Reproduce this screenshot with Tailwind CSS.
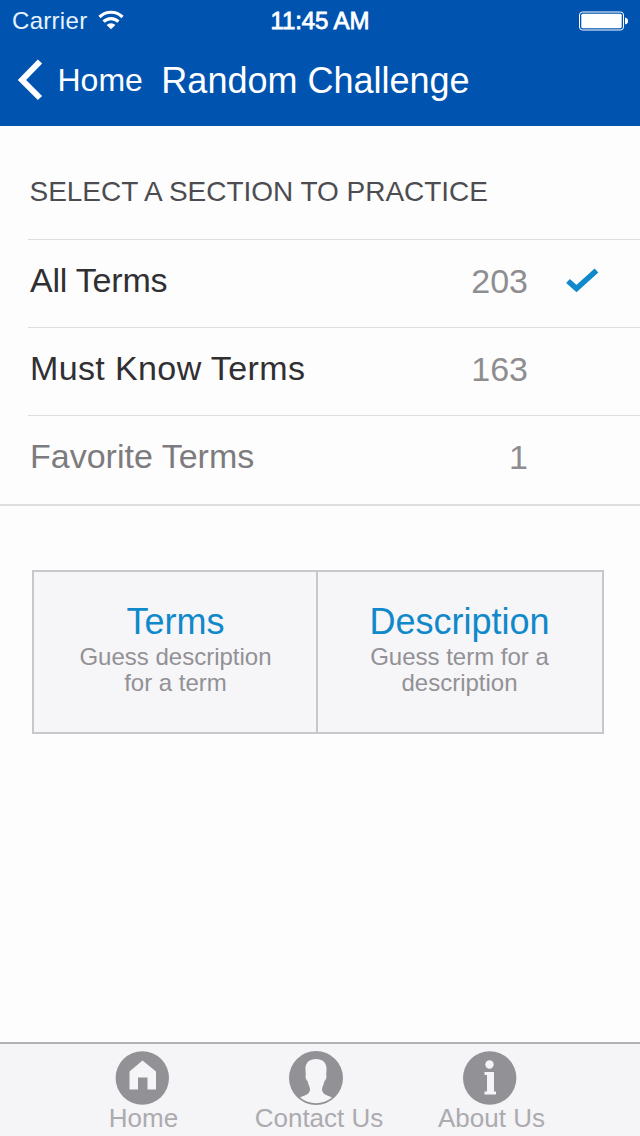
<!DOCTYPE html>
<html lang="en">
<head>
<meta charset="utf-8">
<title>Random Challenge</title>
<script src="https://cdn.jsdelivr.net/npm/@tailwindcss/browser@4"></script>
</head>
<body class="w-[640px] h-[1136px] flex flex-col overflow-hidden bg-[#fefdfe] font-['Liberation_Sans',Arial,sans-serif] whitespace-nowrap">
  <header class="h-[126px] shrink-0 bg-[#0054b0] text-white">
    <div class="h-10 grid grid-cols-3 items-center pl-[12px] pr-[11px] pt-[2px]">
      <div class="flex items-center gap-[11px]">
        <span class="text-[24px] leading-none tracking-[0.3px] text-[#e6f2ff]">Carrier</span>
        <svg class="w-[26px] h-[20px] -mt-[2px]" viewBox="0 0 26 20" fill="none" stroke="#fff" stroke-width="3.200"><path d="M1.500 7A16.300 16.300 0 0 1 24.500 7"/><path d="M5.600 11.700A10.500 10.500 0 0 1 20.400 11.700"/><path d="M8.600 15A6.300 6.300 0 0 1 17.400 15L13 19.300Z" fill="#fff" stroke="none"/></svg>
      </div>
      <span class="text-[24px] leading-none text-center tracking-[-0.1px] -ml-px [-webkit-text-stroke:0.8px_white]">11:45 AM</span>
      <svg class="w-[50px] h-5 justify-self-end -mt-px" viewBox="0 0 50 20"><rect x="0.500" y="1" width="44" height="18" rx="3" fill="none" stroke="#fff"/><rect x="2.300" y="2.800" width="40.400" height="14.400" rx="1.500" fill="#fff"/><path d="M46 6.500q3 .5 3 3.500t-3 3.500z" fill="#fff"/></svg>
    </div>
    <div class="h-[80px] flex items-center pl-[17px]">
      <svg class="w-[26px] h-[42px]" viewBox="0 0 26 42" fill="none" stroke="#fff" stroke-width="6"><path d="M23 2.500L5 21L23 39"/></svg>
      <span class="text-[32px] leading-none ml-[14.5px]">Home</span>
      <h1 class="text-[36px] leading-none ml-[18.5px] pt-[2px]">Random Challenge</h1>
    </div>
  </header>
  <main class="grow">
    <section class="border-b-2 border-[#dedee0] h-[380px]">
      <h2 class="h-[113px] pt-[52px] pl-[29.5px] text-[28px] leading-[28px] tracking-[-0.02px] text-[#4d4c51]">SELECT A SECTION TO PRACTICE</h2>
      <ul class="ml-[28px] text-[34px] leading-[34px] text-[#8e8e90]">
        <li class="h-[88px] border-t border-[#dedee0] flex items-start pt-[23px] pl-[2px]"><span class="grow tracking-[-0.2px] text-[#303033]">All Terms</span><span class="pt-px">203</span><svg class="w-[34px] h-[26px] ml-[37px] mr-[41px] mt-[5px]" viewBox="0 0 34 26" fill="none" stroke="#1089cb" stroke-width="5.500"><path d="M3 13L11.500 20.500L31.500 2.500"/></svg></li>
        <li class="h-[88px] border-t border-[#dedee0] flex items-start pt-[23px] pl-[2px] pr-[112px]"><span class="grow tracking-[0.38px] text-[#303033]">Must Know Terms</span><span class="pt-px">163</span></li>
        <li class="h-[88px] border-t border-[#dedee0] flex items-start pt-[23px] pl-[2px] pr-[112px]"><span class="grow text-[#7c7c7e]">Favorite Terms</span><span class="pt-px">1</span></li>
      </ul>
    </section>
    <section class="mt-[64px] ml-8 w-[572px] h-[164px] flex border-2 border-[#c8c7cc] bg-[#f6f5f8] text-center text-[24px] leading-[26px] text-[#929195]">
      <div class="w-[284px] border-r-2 border-[#c8c7cc] pt-[28px] pl-px"><p class="text-[36px] leading-[44px] text-[#1089cb]">Terms</p><p>Guess description<br>for a term</p></div>
      <div class="grow pt-[28px] pr-px"><p class="text-[36px] leading-[44px] text-[#1089cb]">Description</p><p>Guess term for a<br>description</p></div>
    </section>
  </main>
  <nav class="h-[94px] shrink-0 border-t-2 border-[#b2b1b5] bg-[#f5f4f7] flex justify-center pt-[7px] pr-[8px] text-[26px] leading-[26px] text-[#acabaf]">
    <div class="w-[174px] flex flex-col items-center">
      <svg class="w-[54px] h-[54px]" viewBox="0 0 54 54"><circle cx="27.300" cy="27" r="26.700" fill="#929195"/><path d="M27.500 9.500L41 20.500V38.500H32.500V26.500H23V38.500H14.500V20.500Z" fill="#f5f4f7"/></svg>
      <span class="pl-[3px]">Home</span>
    </div>
    <div class="w-[174px] flex flex-col items-center">
      <svg class="w-[54px] h-[54px]" viewBox="0 0 54 54"><circle cx="27" cy="27" r="27" fill="#929195"/><path d="M27 8C20 8 16 12 16.500 19L16.800 24C16 25 17 29 18.500 30C19 33 20.500 35 21 38C21 43 17 44 11 46.500A25.500 25.500 0 0 0 43 46.500C37 44 33 43 33 38C33.500 35 35 33 35.500 30C37 29 38 25 37.200 24L37.500 19C38 12 34 8 27 8Z" fill="#f5f4f7"/></svg>
      <span class="pl-[6px]">Contact Us</span>
    </div>
    <div class="w-[174px] flex flex-col items-center">
      <svg class="w-[54px] h-[54px]" viewBox="0 0 54 54"><circle cx="26.700" cy="27" r="26.700" fill="#929195"/><circle cx="26.500" cy="13.500" r="4.200" fill="#f5f4f7"/><path d="M21.500 21H31V40.500H33V43.500H21.500V40.500H24V24H21.500Z" fill="#f5f4f7"/></svg>
      <span class="pl-[3px]">About Us</span>
    </div>
  </nav>
</body>
</html>
